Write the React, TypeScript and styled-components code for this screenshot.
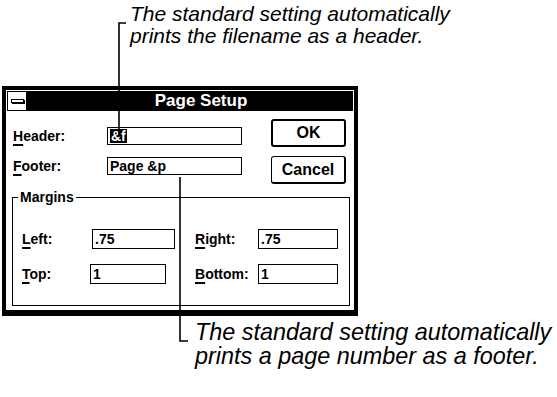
import styled, { createGlobalStyle } from "styled-components";

const GlobalStyle = createGlobalStyle`
  html, body {
    margin: 0;
    padding: 0;
    background: #ffffff;
  }
  body {
    width: 557px;
    height: 397px;
    overflow: hidden;
  }
`;

const Page = styled.div`
  position: relative;
  width: 557px;
  height: 397px;
  background: #ffffff;
  color: #000000;
  font-family: "Liberation Sans", Arial, sans-serif;
`;

const Caption = styled.div<{ $indent: number; $top: number; $size: number }>`
  padding-left: ${(p) => p.$indent}px;
  margin-top: ${(p) => p.$top}px;
  font-style: italic;
  font-size: ${(p) => p.$size}px;
  line-height: ${(p) => Math.round(p.$size * 1.03)}px;
  white-space: nowrap;
`;

const Dialog = styled.div`
  margin: 39px 0 0 2px;
  width: 356px;
  box-sizing: border-box;
  border: 4px solid #000000;
  border-bottom-width: 6px;
  padding: 1px;
  background: #ffffff;
  font-weight: bold;
  font-size: 14px;
`;

const TitleBar = styled.div`
  display: flex;
  height: 20px;
  background: #000000;
`;

const SysMenu = styled.div`
  width: 20px;
  box-sizing: border-box;
  background: #ffffff;
  border: 1px solid #000000;
  display: flex;
  align-items: center;
  justify-content: center;

  &::after {
    content: "";
    width: 11px;
    height: 2px;
    border: 1.5px solid #000000;
    background: #ffffff;
    box-shadow: 1px 1px 0 #000000;
  }
`;

const Title = styled.div`
  flex: 1;
  padding-left: 22px;
  text-align: center;
  color: #ffffff;
  font-size: 17px;
  line-height: 20px;
`;

const Body = styled.div`
  display: flex;
  flex-direction: column;
  padding: 8px 7px 3px 6px;
`;

const TopArea = styled.div`
  display: flex;
`;

const FieldColumn = styled.div`
  display: flex;
  flex-direction: column;
  gap: 12px;
  padding-top: 8px;
`;

const Row = styled.div`
  display: flex;
  align-items: center;
`;

const Label = styled.div<{ $width?: number }>`
  width: ${(p) => (p.$width ? `${p.$width}px` : "auto")};
  flex: none;
  line-height: 16px;

  u {
    text-underline-offset: 3px;
    text-decoration-thickness: 2px;
  }
`;

const Field = styled.div<{ $width: number; $height?: number; $align?: string }>`
  width: ${(p) => p.$width}px;
  height: ${(p) => p.$height ?? 18}px;
  justify-self: ${(p) => p.$align ?? "start"};
  box-sizing: border-box;
  border: 1px solid #000000;
  display: flex;
  align-items: center;
  padding-left: 2px;
`;

const Selected = styled.span`
  background: #000000;
  color: #ffffff;
  padding: 0 1px;
  line-height: 14px;
`;

const ButtonColumn = styled.div`
  display: flex;
  flex-direction: column;
  gap: 9px;
  margin-left: auto;
`;

const Button = styled.div<{ $default?: boolean }>`
  width: 75px;
  height: 28px;
  box-sizing: border-box;
  border: ${(p) => (p.$default ? "2px" : "1px")} solid #000000;
  border-right-width: 2px;
  border-bottom-width: 2px;
  border-radius: 3px;
  display: flex;
  align-items: center;
  justify-content: center;
  font-size: 16px;
`;

const Group = styled.fieldset`
  margin: 5px -4px 0 -1px;
  padding: 24px 0 21px 9px;
  border: 1px solid #000000;
  min-width: 0;
`;

const Legend = styled.legend`
  margin-left: -4px;
  padding: 0 2px;
  line-height: 16px;
`;

const MarginGrid = styled.div`
  display: grid;
  grid-template-columns: 68px 85px 20px 63px 80px;
  grid-auto-rows: 20px;
  row-gap: 15px;
  align-items: center;
`;

const Leaders = styled.svg`
  position: absolute;
  left: 0;
  top: 0;
  pointer-events: none;
`;

export default function App() {
  return (
    <>
      <GlobalStyle />
      <Page>
        <Caption $indent={130} $top={3} $size={21}>
          The standard setting automatically
          <br />
          prints the filename as a header.
        </Caption>

        <Dialog>
          <TitleBar>
            <SysMenu />
            <Title>Page Setup</Title>
          </TitleBar>
          <Body>
            <TopArea>
              <FieldColumn>
                <Row>
                  <Label $width={94}>
                    <u>H</u>eader:
                  </Label>
                  <Field $width={135}>
                    <Selected>&amp;f</Selected>
                  </Field>
                </Row>
                <Row>
                  <Label $width={94}>
                    <u>F</u>ooter:
                  </Label>
                  <Field $width={135}>Page &amp;p</Field>
                </Row>
              </FieldColumn>
              <ButtonColumn>
                <Button $default>OK</Button>
                <Button>Cancel</Button>
              </ButtonColumn>
            </TopArea>

            <Group>
              <Legend>Margins</Legend>
              <MarginGrid>
                <Label>
                  <u>L</u>eft:
                </Label>
                <Field $width={83} $height={20} $align="end">
                  .75
                </Field>
                <span />
                <Label>
                  <u>R</u>ight:
                </Label>
                <Field $width={80} $height={20}>
                  .75
                </Field>

                <Label>
                  <u>T</u>op:
                </Label>
                <Field $width={76} $height={20}>
                  1
                </Field>
                <span />
                <Label>
                  <u>B</u>ottom:
                </Label>
                <Field $width={80} $height={20}>
                  1
                </Field>
              </MarginGrid>
            </Group>
          </Body>
        </Dialog>

        <Caption $indent={195} $top={4} $size={23.4}>
          The standard setting automatically
          <br />
          prints a page number as a footer.
        </Caption>

        <Leaders width={557} height={397} viewBox="0 0 557 397">
          <path d="M126 20 H119 V134" fill="none" stroke="#000" strokeWidth={1.6} />
          <path d="M180 174 V338 H188" fill="none" stroke="#000" strokeWidth={1.6} />
        </Leaders>
      </Page>
    </>
  );
}
